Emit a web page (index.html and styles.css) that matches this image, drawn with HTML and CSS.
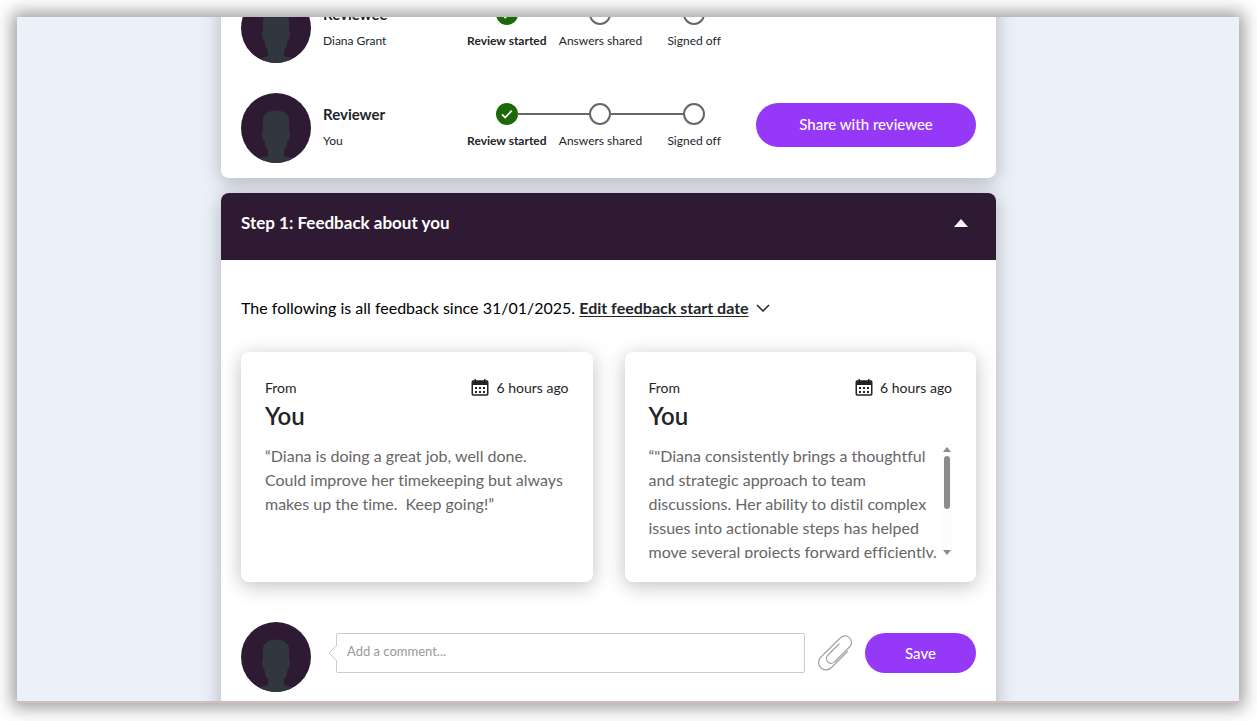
FILE: index.html
```html
<!DOCTYPE html>
<html lang="en">
<head>
<meta charset="utf-8">
<meta name="viewport" content="width=device-width, initial-scale=1">
<title>Review feedback</title>
<link rel="stylesheet" href="styles.css">
</head>
<body>
<svg class="sprite" aria-hidden="true">
  <symbol id="avatar" viewBox="0 0 70 70">
    <circle cx="35" cy="35" r="35" fill="#2e1a32"/>
    <path fill="#30373e" d="M35 17.500c-3 0-6 .7-9 2.500-3 1.700-4 4-4 7v11c-1 .3-1.200 1.500-1 3.500.3 3 .8 5.500 2.500 6.500l1 6c.5 1.500 2.500 2 2.500 3.500v5.500c-1 .8-5 .8-9 2.500A35 35 0 0 0 52 65.500c-4-1.700-8-1.700-9-2.500v-5.500c0-1.500 2-2 2.500-3.500l1-6c1.700-1 2.200-3.500 2.500-6.500.2-2 0-3.200-1-3.500V27c0-3-1-5.300-4-7-3-1.800-6-2.500-9-2.500z"/>
  </symbol>
  <symbol id="done" viewBox="0 0 22 22">
    <circle cx="11" cy="11" r="11" fill="#1b6908"/>
    <path d="M6 11.300l3.200 3.200 6.600-6.900" fill="none" stroke="#fff" stroke-width="1.700"/>
  </symbol>
  <symbol id="calendar" viewBox="0 0 18 18">
    <path fill="#212529" fill-rule="evenodd" d="M3.500 0h1.500v1.300h8V0h1.500v1.300h1.300c1 0 1.700.7 1.700 1.700v12c0 1-.7 1.700-1.700 1.700H2.200c-1 0-1.700-.7-1.700-1.700V3c0-1 .7-1.700 1.700-1.700h1.300zM2 6v8.500c0 .5.2.7.7.7h12.600c.5 0 .7-.2.7-.7V6z"/>
    <path stroke="#212529" stroke-width="2" stroke-dasharray="2 2" d="M4 9h10M4 13h10"/>
  </symbol>
</svg>
<div class="frame">
  <main class="page">
    <section class="card people">
      <div class="person">
        <svg class="avatar"><use href="#avatar"/></svg>
        <div class="who"><strong>Reviewee</strong><span>Diana Grant</span></div>
        <ol class="steps">
          <li class="current"><svg class="dot"><use href="#done"/></svg>Review started</li>
          <li><span class="dot"></span>Answers shared</li>
          <li><span class="dot"></span>Signed off</li>
        </ol>
        <div class="action"></div>
      </div>
      <div class="person">
        <svg class="avatar"><use href="#avatar"/></svg>
        <div class="who"><strong>Reviewer</strong><span>You</span></div>
        <ol class="steps">
          <li class="current"><svg class="dot"><use href="#done"/></svg>Review started</li>
          <li><span class="dot"></span>Answers shared</li>
          <li><span class="dot"></span>Signed off</li>
        </ol>
        <div class="action"><button class="pill share" type="button">Share with reviewee</button></div>
      </div>
    </section>

    <section class="card">
      <button class="step-head" type="button" aria-expanded="true">
        <span>Step 1: Feedback about you</span>
        <svg class="caret" viewBox="0 0 14 8"><path d="M7 0l7 8H0z" fill="#fff"/></svg>
      </button>
      <div class="step-body">
        <p class="intro">The following is all feedback since 31/01/2025. <a href="#date">Edit feedback start date</a>
          <svg class="chevron" viewBox="0 0 14 8"><path d="M1 1l6 6 6-6" fill="none" stroke="#212529" stroke-width="1.500"/></svg></p>
        <div class="quotes">
          <article class="quote">
            <div class="meta"><span>From</span><span class="time"><svg class="cal"><use href="#calendar"/></svg>6 hours ago</span></div>
            <h3>You</h3>
            <div class="words"><p>“Diana is doing a great job, well done. Could improve her timekeeping but always makes up the time.&nbsp; Keep going!”</p></div>
          </article>
          <article class="quote">
            <div class="meta"><span>From</span><span class="time"><svg class="cal"><use href="#calendar"/></svg>6 hours ago</span></div>
            <h3>You</h3>
            <div class="words">
              <p>“"Diana consistently brings a thoughtful and strategic approach to team discussions. Her ability to distil complex issues into actionable steps has helped move several projects forward efficiently.</p>
              <div class="bar" aria-hidden="true">
                <svg class="tip" viewBox="0 0 8 5"><path d="M4 0l4 5H0z" fill="#8b8b8b"/></svg>
                <div class="thumb"></div>
                <svg class="tip" viewBox="0 0 8 5"><path d="M0 0h8L4 5z" fill="#8b8b8b"/></svg>
              </div>
            </div>
          </article>
        </div>
        <form class="comment">
          <svg class="avatar"><use href="#avatar"/></svg>
          <div class="field">
            <input type="text" placeholder="Add a comment..." aria-label="Add a comment">
            <svg class="beak" viewBox="0 0 9 18"><path d="M9 1L1 9l8 8z" fill="#fff"/><path d="M9 1L1 9l8 8" fill="none" stroke="#ccc"/></svg>
          </div>
          <button class="attach" type="button" aria-label="Attach a file">
            <svg viewBox="0 0 34 36" fill="none" stroke="#a3a3a3" stroke-width="1.200" stroke-linecap="round"><path d="M29.500 16.500L13.500 32.500A7.300 7.300 0 0 1 2.500 22.500L22 3.300A6.200 6.200 0 0 1 32 11.500L17 26.500A4.600 4.600 0 0 1 9.500 20.500L21 9"/></svg>
          </button>
          <button class="pill save" type="button">Save</button>
        </form>
      </div>
    </section>
  </main>
</div>
</body>
</html>
```
FILE: styles.css
```css
* { box-sizing: border-box; }
body {
  margin: 0;
  height: 100vh;
  padding: 17px 18px 18px 17px;
  background: #fff;
  color: #212529;
  font-family: Lato, "Liberation Sans", sans-serif;
  font-size: 16px;
  line-height: 24px;
  font-variant-ligatures: none;
  overflow: hidden;
}
button, input { font: inherit; }
button { border: 0; cursor: pointer; }
svg { display: block; }
.sprite { position: absolute; width: 0; height: 0; }
.frame {
  height: 100%;
  overflow: hidden;
  padding-right: 39px;
  background: #ebf0f9;
  border-bottom: 2px solid #d3bcbc;
  box-shadow: 0 0 16px 5px rgba(0, 0, 0, .38);
}
.page {
  display: flex;
  flex-direction: column;
  gap: 15px;
  max-width: 775px;
  margin: -44px auto 0;
}
.card {
  border-radius: 8px;
  background: #fff;
  box-shadow: 0 4px 20px rgba(0, 0, 0, .25);
}
.people {
  display: flex;
  flex-direction: column;
  gap: 30px;
  padding: 20px 20px 15px;
}
.person { display: flex; }
.avatar { flex: none; width: 70px; height: 70px; }
.who {
  flex: 1;
  display: flex;
  flex-direction: column;
  gap: 6px;
  padding: 10px 0 0 12px;
}
.who strong { font-size: 15px; line-height: 22px; }
.who span { font-size: 12px; line-height: 20px; }
.steps {
  flex: none;
  display: grid;
  grid-template-columns: repeat(3, 1fr);
  width: 281px;
  margin: 0 15px 0 0;
  padding: 10px 0 0;
  list-style: none;
  font-size: 12px;
  line-height: 20px;
}
.steps li {
  position: relative;
  display: flex;
  flex-direction: column;
  align-items: center;
  gap: 6px;
  white-space: nowrap;
}
.steps li + li::before {
  content: "";
  position: absolute;
  top: 10px;
  right: calc(50% + 10px);
  width: calc(100% - 20px);
  height: 2px;
  background: #666;
}
.steps .current { font-weight: bold; }
.dot { width: 22px; height: 22px; }
span.dot { border: 2px solid #666; border-radius: 50%; background: #fff; }
.action { flex: none; width: 220px; padding-top: 10px; }
.pill { background: #9538f7; color: #fff; font-size: 15px; font-weight: 500; }
.share { width: 100%; height: 44px; padding: 0 0 3px; border-radius: 22px; }
.step-head {
  display: flex;
  justify-content: space-between;
  width: 100%;
  padding: 18px 28px 25px 20px;
  border-radius: 8px 8px 0 0;
  background: #2e1a32;
  color: #fff;
  font-size: 17px;
  font-weight: bold;
}
.caret { width: 14px; height: 8px; margin-top: 8px; }
.step-body { padding: 36px 20px 30px; }
.intro { margin: 0 0 32px; color: #000; }
.intro a {
  color: #212529;
  font-weight: bold;
  text-underline-offset: 2px;
}
.chevron { display: inline-block; width: 14px; height: 8px; margin: 0 0 2px 3px; }
.quotes { display: grid; grid-template-columns: 1fr 1fr; gap: 32px; }
.quote {
  padding: 24px;
  border-radius: 8px;
  background: #fff;
  box-shadow: 0 4px 20px rgba(0, 0, 0, .25);
}
.meta { display: flex; justify-content: space-between; font-size: 14px; }
.time { display: flex; align-items: center; gap: 7px; }
.cal { width: 18px; height: 18px; }
.quote h3 { margin: 0 0 12px; font-size: 24px; line-height: 32px; font-weight: 600; }
.words { display: flex; height: 114px; overflow: hidden; color: #666; }
.words p { flex: 1; margin: 0; }
.bar {
  display: flex;
  flex-direction: column;
  align-items: center;
  width: 10px;
  padding: 3px 0;
  background: #fcfcfc;
}
.tip { width: 8px; height: 5px; }
.thumb {
  width: 6px;
  height: 53px;
  margin: 4px 0 auto;
  border-radius: 3px;
  background: #8b8b8b;
}
.comment { display: flex; margin-top: 40px; }
.field { position: relative; flex: 1; height: 40px; margin: 11px 13px 0 25px; }
.field input {
  width: 100%;
  height: 100%;
  padding: 0 10px 4px;
  border: 1px solid #ccc;
  border-radius: 2px;
  background: #fff;
  font-size: 13px;
}
.field input::placeholder { color: #999; opacity: 1; }
.beak { position: absolute; top: 11px; left: -8px; width: 9px; height: 18px; }
.attach { width: 34px; height: 36px; margin: 13px 13px 0 0; padding: 0; background: none; }
.save { width: 111px; height: 40px; margin-top: 11px; border-radius: 20px; }
```
